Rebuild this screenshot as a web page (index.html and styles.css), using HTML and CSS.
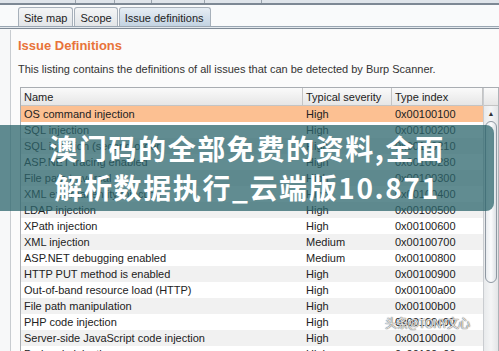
FILE: index.html
```html
<!DOCTYPE html>
<html lang="en">
<head>
    <meta charset="UTF-8">
    <title>Issue definitions</title>
    <link rel="stylesheet" href="styles.css">
</head>
<body>
    <div class="topbar">
        <span class="ttab t1"></span><span class="ttab t2"></span><span class="ttab t3"></span><span class="ttab t4"></span><span class="ttab t5"></span>
    </div>
    <div class="tabs">
        <div class="tab">Site map</div>
        <div class="tab">Scope</div>
        <div class="tab active">Issue definitions</div>
    </div>
    <div class="panel">
        <h2>Issue Definitions</h2>
        <p class="intro">This listing contains the definitions of all issues that can be detected by Burp Scanner.</p>
        <div class="grid">
            <div class="table">
                <div class="row head">
                    <div class="c name">Name</div>
                    <div class="c sev">Typical severity</div>
                    <div class="c idx">Type index</div>
                </div>
                <div id="rows"></div>
            </div>
            <div class="scroll">
                <div class="sc-head"></div>
                <div class="sc-up">&#9650;</div>
                <div class="sc-thumb"></div>
            </div>
        </div>
    </div>

    <div class="banner">
        <div>澳门码的全部免费的资料,全面</div>
        <div>解析数据执行_云端版10.871</div>
    </div>
    <div class="mark">头条@TONY文心</div>

    <script>
        let issues = [
            ['OS command injection', 'High', '0x00100100'],
            ['SQL injection', 'High', '0x00100200'],
            ['SQL injection (second order)', 'High', '0x00100210'],
            ['ASP.NET tracing enabled', 'High', '0x00100280'],
            ['File path traversal', 'High', '0x00100300'],
            ['XML external entity injection', 'High', '0x00100400'],
            ['LDAP injection', 'High', '0x00100500'],
            ['XPath injection', 'High', '0x00100600'],
            ['XML injection', 'Medium', '0x00100700'],
            ['ASP.NET debugging enabled', 'Medium', '0x00100800'],
            ['HTTP PUT method is enabled', 'High', '0x00100900'],
            ['Out-of-band resource load (HTTP)', 'High', '0x00100a00'],
            ['File path manipulation', 'High', '0x00100b00'],
            ['PHP code injection', 'High', '0x00100c00'],
            ['Server-side JavaScript code injection', 'High', '0x00100d00'],
            ['Perl code injection', 'High', '0x00100e00']
        ];
        let box = document.getElementById('rows');
        issues.forEach((it, i) => {
            let cls = i === 0 ? 'row sel' : (i % 2 ? 'row' : 'row alt');
            box.innerHTML += `<div class="${cls}">
                <div class="c name">${it[0]}</div>
                <div class="c sev">${it[1]}</div>
                <div class="c idx">${it[2]}</div>
            </div>`;
        });
    </script>
</body>
</html>
```
FILE: styles.css
```css
body {
    margin: 0;
    width: 499px;
    height: 351px;
    overflow: hidden;
    position: relative;
    background: #f7f8f9;
    font-family: "Liberation Sans", Arial, sans-serif;
    font-size: 11px;
    color: #222;
}
.topbar {
    height: 3px;
    border-bottom: 2px solid #7d8894;
    background: #dfe4ea;
    display: flex;
}
.ttab {
    border-right: 1px solid #9aa3ad;
    height: 3px;
}
.t1 { width: 75px; }
.t2 { width: 38px; }
.t3 { width: 36px; }
.t4 { width: 52px; }
.t5 { width: 56px; }
.tabs {
    display: flex;
    padding: 2px 0 0 18px;
    height: 19px;
    border-bottom: 1px solid #9aa6b2;
    box-shadow: 0 1px 0 #e4e9ee, 0 2px 0 #7f8a96;
    background: #f9fafb;
}
.tab {
    padding: 4px 5px 0 5px;
    margin-right: 1px;
    border: 1px solid #a7b0ba;
    border-bottom: none;
    border-radius: 3px 3px 0 0;
    background: linear-gradient(#f4f5f6, #e2e5e8);
    color: #222;
}
.tab.active {
    background: linear-gradient(#e6edf4, #c3d3e2);
    padding-right: 6px;
}
.panel {
    margin: 3px 0 0 10px;
    border-left: 1px solid #c8ccd0;
    background: #fbfbfb;
    height: 330px;
    padding: 0 0 0 6px;
}
h2 {
    margin: 0;
    padding: 8px 0 0 1px;
    height: 19px;
    font-size: 13px;
    color: #e8733a;
}
.intro {
    margin: 6px 0 0 1px;
    color: #333;
}
.grid {
    display: flex;
    margin: 12px 0 0 3px;
    border-left: 1px solid #a9adb2;
    border-top: 1px solid #a9adb2;
}
.table {
    width: 462px;
}
.row {
    display: flex;
    height: 16px;
    line-height: 16px;
    background: #ffffff;
}
.row.alt { background: #f1f1f1; }
.row.sel { background: #fcc092; }
.row.head {
    height: 17px;
    line-height: 18px;
    background: linear-gradient(#fafafa, #e6e6e6);
    border-bottom: 1px solid #c4c4c4;
}
.row.head .c {
    border-right: 1px solid #c4c4c4;
}
.c {
    padding-left: 3px;
    box-sizing: border-box;
    white-space: nowrap;
    overflow: hidden;
}
.name { width: 282px; }
.sev { width: 89px; }
.idx { width: 91px; }
.scroll {
    width: 15px;
    border-left: 1px solid #c9ccd0;
    border-right: 1px solid #aeb3b8;
    background: linear-gradient(90deg, #e8eaec, #f4f5f6, #e3e5e7);
}
.sc-head {
    height: 17px;
    border-bottom: 1px solid #c4c4c4;
    background: linear-gradient(#fafafa, #e6e6e6);
}
.sc-up {
    height: 15px;
    font-size: 7px;
    text-align: center;
    line-height: 15px;
    color: #333;
}
.sc-thumb {
    margin: 0 1px;
    height: 160px;
    border: 1px solid #8f98a2;
    border-radius: 7px;
    background: linear-gradient(90deg, #e9ecef, #fbfcfd, #dde1e5);
}
.banner {
    position: absolute;
    left: 0;
    top: 125px;
    width: 494px;
    height: 86px;
    border-radius: 0 8px 8px 0;
    background: rgba(44, 102, 108, 0.75);
    color: #ffffff;
    font-family: "Noto Sans CJK SC", "Noto Sans", sans-serif;
    font-weight: bold;
    font-size: 28px;
    line-height: 39px;
    text-align: center;
    padding-top: 4px;
    box-sizing: border-box;
    letter-spacing: 1.6px;
}
.mark {
    position: absolute;
    left: 385px;
    top: 314px;
    font-family: "Noto Sans CJK SC", sans-serif;
    font-size: 12px;
    letter-spacing: -0.6px;
    color: rgba(255, 255, 255, 0.85);
    text-shadow: 0 0 1px #555, 0 0 1px #555;
}
```
